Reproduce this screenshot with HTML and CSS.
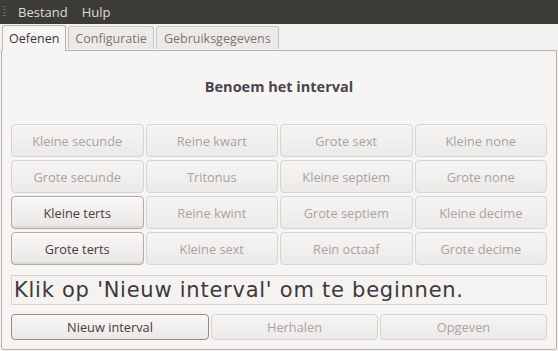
FILE: index.html
```html
<!DOCTYPE html>
<html>
<head>
<meta charset="utf-8">
<link rel="stylesheet" href="styles.css">
</head>
<body>
<div class="menubar">
  <span class="grip"></span>
  <span class="menu-item">Bestand</span>
  <span class="menu-item">Hulp</span>
</div>
<div class="tabs">
  <div class="tab active">Oefenen</div>
  <div class="tab">Configuratie</div>
  <div class="tab">Gebruiksgegevens</div>
</div>
<div class="frame">
  <div class="title">Benoem het interval</div>
  <div class="grid">
    <div class="btn dis">Kleine secunde</div>
    <div class="btn dis">Reine kwart</div>
    <div class="btn dis">Grote sext</div>
    <div class="btn dis">Kleine none</div>
    <div class="btn dis">Grote secunde</div>
    <div class="btn dis">Tritonus</div>
    <div class="btn dis">Kleine septiem</div>
    <div class="btn dis">Grote none</div>
    <div class="btn en">Kleine terts</div>
    <div class="btn dis">Reine kwint</div>
    <div class="btn dis">Grote septiem</div>
    <div class="btn dis">Kleine decime</div>
    <div class="btn en">Grote terts</div>
    <div class="btn dis">Kleine sext</div>
    <div class="btn dis">Rein octaaf</div>
    <div class="btn dis">Grote decime</div>
  </div>
  <div class="message">Klik op 'Nieuw interval' om te beginnen.</div>
  <div class="actions">
    <div class="btn en focus">Nieuw interval</div>
    <div class="btn dis">Herhalen</div>
    <div class="btn dis">Opgeven</div>
  </div>
</div>
</body>
</html>
```

FILE: styles.css
```css
html, body {
  margin: 0;
  padding: 0;
}
body {
  width: 558px;
  height: 351px;
  background: #f2f1f0;
  font-family: "Open Sans", "DejaVu Sans", sans-serif;
  font-size: 12px;
  overflow: hidden;
}
.menubar {
  height: 24px;
  background: #3c3b37;
  display: flex;
  align-items: center;
  color: #dfdbd2;
  font-size: 13px;
}
.grip {
  width: 3px;
  height: 12px;
  margin: 0 12px 0 3px;
  background: repeating-linear-gradient(to bottom, #6a6862 0 1px, transparent 1px 3px);
}
.menu-item {
  margin-right: 14px;
}
.tabs {
  height: 26px;
  display: flex;
  align-items: flex-end;
  padding-left: 2px;
  gap: 2px;
  position: relative;
  z-index: 1;
}
.tab {
  height: 22px;
  padding: 0 6px;
  display: flex;
  align-items: center;
  border: 1px solid #c9c4c0;
  border-bottom: none;
  border-radius: 3px 3px 0 0;
  background: #eceae8;
  color: #7d7470;
  font-size: 12.5px;
  margin-bottom: 1px;
}
.tab:last-child {
  padding: 0 7px;
}
.tab.active {
  height: 25px;
  margin-bottom: -1px;
  background: #f6f5f4;
  color: #3c3434;
  border-color: #bdb7b3;
}
.frame {
  margin: 0 1px;
  height: 298px;
  border: 1px solid #b8b1ad;
  border-radius: 0 0 3px 3px;
  background: #f6f5f4;
  padding: 0 9px;
}
.title {
  padding-top: 27px;
  height: 18px;
  line-height: 18px;
  margin-bottom: 28px;
  text-align: center;
  font-weight: bold;
  font-size: 14.5px;
  color: #4a4450;
}
.grid {
  display: grid;
  grid-template-columns: repeat(4, 1fr);
  grid-auto-rows: 33px;
  column-gap: 2px;
  row-gap: 3px;
}
.btn {
  display: flex;
  align-items: center;
  justify-content: center;
  border-radius: 4px;
  box-sizing: border-box;
  font-size: 12.8px;
}
.btn.dis {
  border: 1px solid #d8d4d1;
  background: linear-gradient(to bottom, #f6f5f4, #eceae8);
  color: #aaa29e;
}
.btn.en {
  border: 1px solid #b2aaa6;
  background: linear-gradient(to bottom, #f8f7f6, #eae8e5);
  color: #4c3a3a;
  box-shadow: inset 0 -3px 0 -1px #dcdad6, inset 0 1px 0 #ffffff;
}
.btn.focus {
  border-color: #968a86;
  box-shadow: inset 0 1px 0 #ffffff;
}
.message {
  margin-top: 10px;
  height: 30px;
  box-sizing: border-box;
  border: 1px solid #d6d2ce;
  background: #f4f3f1;
  display: flex;
  align-items: center;
  padding-left: 2px;
  font-family: "DejaVu Sans", sans-serif;
  font-size: 21px;
  letter-spacing: 0.75px;
  color: #40383a;
}
.actions {
  margin-top: 9px;
  display: grid;
  grid-template-columns: 198px 1fr 1fr;
  column-gap: 2px;
  height: 26px;
}
```
